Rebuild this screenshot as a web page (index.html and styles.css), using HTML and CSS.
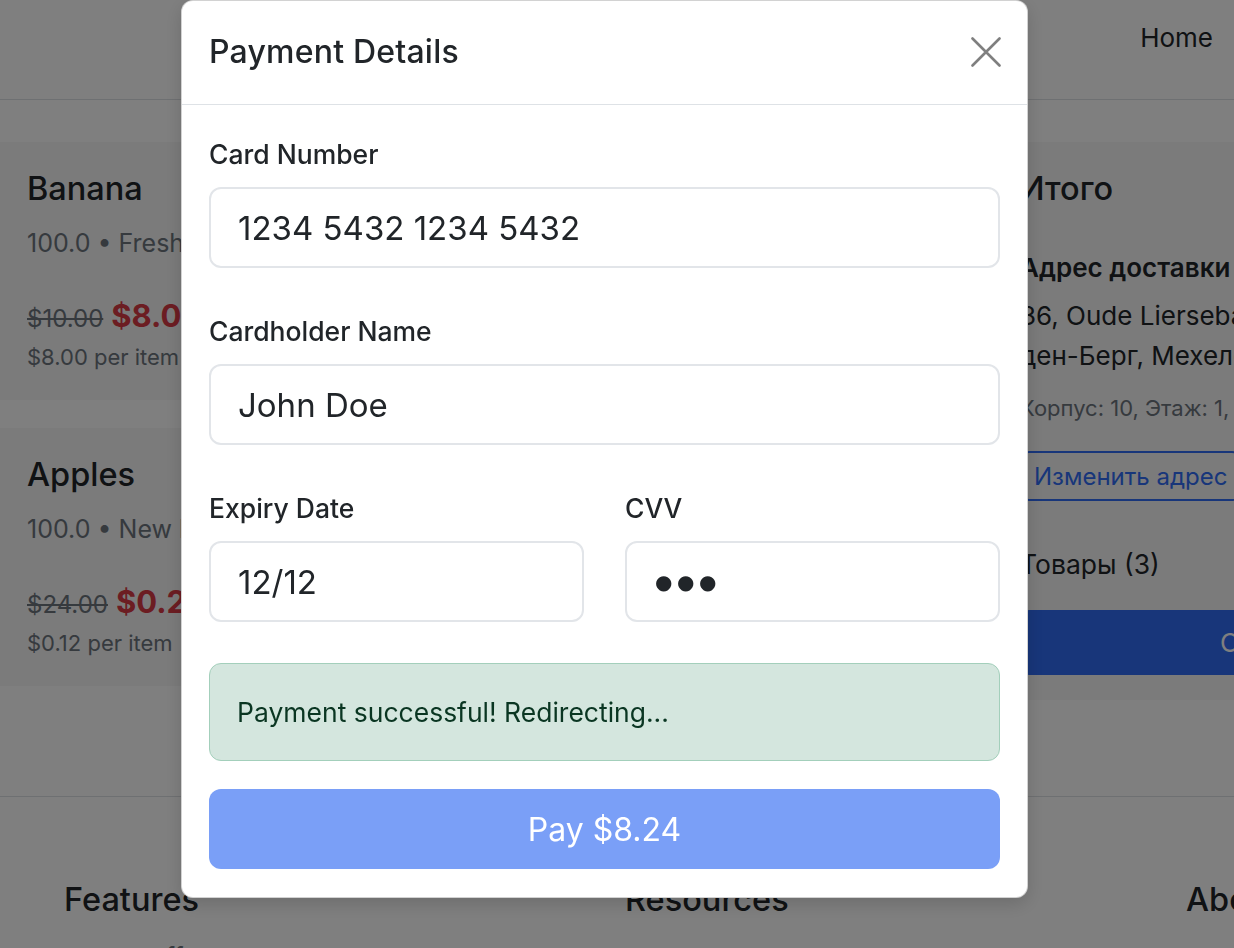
FILE: index.html
```html
<!DOCTYPE html>
<html lang="en">
<head>
<meta charset="utf-8">
<title>Checkout</title>
<link rel="stylesheet" href="styles.css">
</head>
<body>
<div class="page">
  <header class="topbar">
    <nav class="topbar-inner">
      <a class="nav-link" href="#">Home</a>
    </nav>
  </header>

  <main class="main">
    <section class="products">
      <article class="product">
        <h3 class="product-title">Banana</h3>
        <p class="product-meta">100.0 • Fresh fruits</p>
        <div class="price-row">
          <span class="old-price">$10.00</span>
          <span class="new-price">$8.00</span>
        </div>
        <p class="per-item">$8.00 per item</p>
      </article>
      <article class="product">
        <h3 class="product-title">Apples</h3>
        <p class="product-meta">100.0 • New harvest</p>
        <div class="price-row">
          <span class="old-price">$24.00</span>
          <span class="new-price">$0.24</span>
        </div>
        <p class="per-item">$0.12 per item</p>
      </article>
    </section>

    <aside class="summary">
      <h3 class="summary-title">Итого</h3>
      <p class="addr-label">Адрес доставки</p>
      <p class="addr-line">36, Oude Liersebaan, Синт-Катлейне-Вавер-</p>
      <p class="addr-line">ден-Берг, Мехелен, Бельгия</p>
      <p class="addr-extra">Корпус: 10, Этаж: 1, Квартира: 5</p>
      <button class="btn-outline" type="button">Изменить адрес</button>
      <p class="items-count">Товары (3)</p>
      <button class="btn-checkout" type="button">Оформить заказ</button>
    </aside>
  </main>

  <footer class="footer">
    <div class="footer-col">
      <h5 class="footer-title">Features</h5>
      <p class="footer-link">Cool stuff</p>
    </div>
    <div class="footer-col">
      <h5 class="footer-title">Resources</h5>
      <p class="footer-link">Resource</p>
    </div>
    <div class="footer-col">
      <h5 class="footer-title">About</h5>
      <p class="footer-link">Team</p>
    </div>
  </footer>
</div>

<div class="backdrop"></div>

<div class="modal" role="dialog" aria-label="Payment Details">
  <div class="modal-header">
    <h2 class="modal-title">Payment Details</h2>
    <button class="btn-close" type="button" aria-label="Close">
      <svg width="30" height="30" viewBox="0 0 30 30"><path d="M1.5 1.5 L28.5 28.5 M28.5 1.5 L1.5 28.5" stroke="#000" stroke-opacity="0.5" stroke-width="2.6" stroke-linecap="round"/></svg>
    </button>
  </div>
  <div class="modal-body">
    <div class="field">
      <label class="label" for="card">Card Number</label>
      <input class="input" id="card" type="text" value="1234 5432 1234 5432" readonly>
    </div>
    <div class="field">
      <label class="label" for="name">Cardholder Name</label>
      <input class="input" id="name" type="text" value="John Doe" readonly>
    </div>
    <div class="field-row">
      <div>
        <label class="label" for="exp">Expiry Date</label>
        <input class="input" id="exp" type="text" value="12/12" readonly>
      </div>
      <div>
        <label class="label" for="cvv">CVV</label>
        <input class="input input-cvv" id="cvv" type="text" value="●●●" readonly>
      </div>
    </div>
    <div class="alert">Payment successful! Redirecting...</div>
    <button class="btn-pay" type="button" disabled>Pay $8.24</button>
  </div>
</div>
</body>
</html>
```

FILE: styles.css
```css
* { box-sizing: border-box; }

html, body {
  margin: 0;
  height: 100%;
  overflow: hidden;
}

body {
  font-family: Inter, "Liberation Sans", "Noto Sans", sans-serif;
  color: #212529;
  background: #ffffff;
}

p, h2, h3, h5 { margin: 0; }

.page { width: 1800px; }

/* top bar */
.topbar {
  height: 100px;
  border-bottom: 1px solid #dde0e4;
}
.topbar-inner {
  width: 1213px;
  display: flex;
  justify-content: flex-end;
  padding-top: 20px;
}
.nav-link {
  font-size: 26px;
  line-height: 36px;
  color: #212529;
  text-decoration: none;
}

/* main */
.main {
  display: grid;
  grid-template-columns: 966px 662px;
  column-gap: 27px;
  align-items: start;
  padding: 42px 0 96px;
}
.products {
  display: flex;
  flex-direction: column;
  gap: 28px;
}
.product {
  background: #f6f6f7;
  padding: 29px 27px 27px;
}
.product-title {
  font-size: 32.5px;
  line-height: 36px;
  font-weight: 500;
  margin-bottom: 18px;
}
.product-meta {
  font-size: 25px;
  line-height: 36px;
  color: #6c757d;
  margin-bottom: 37px;
}
.price-row {
  display: flex;
  align-items: baseline;
  gap: 8px;
  height: 36px;
  line-height: 36px;
}
.old-price {
  font-size: 24px;
  color: #6c757d;
  text-decoration: line-through;
}
.new-price {
  font-size: 31px;
  font-weight: 700;
  color: #d93a45;
}
.per-item {
  font-size: 22px;
  line-height: 31px;
  color: #6c757d;
  margin-top: 8px;
}

.summary {
  background: #f6f6f7;
  padding: 29px 27px 25px;
}
.summary-title {
  font-size: 32.5px;
  line-height: 36px;
  font-weight: 500;
  margin-bottom: 43px;
}
.addr-label {
  font-size: 26px;
  line-height: 36px;
  font-weight: 600;
  margin-bottom: 10px;
}
.addr-line {
  font-size: 26px;
  line-height: 40px;
  white-space: nowrap;
}
.addr-extra {
  font-size: 22px;
  line-height: 30px;
  color: #6c757d;
  margin-top: 17px;
  white-space: nowrap;
}
.btn-outline {
  display: block;
  margin-top: 28px;
  height: 50px;
  padding: 0 12px;
  border: 2px solid #306cf4;
  border-radius: 9px;
  background: transparent;
  color: #306cf4;
  font: inherit;
  font-size: 24px;
}
.items-count {
  font-size: 26.5px;
  line-height: 36px;
  margin-top: 45px;
}
.btn-checkout {
  display: block;
  width: 100%;
  margin-top: 28px;
  height: 65px;
  border: 0;
  border-radius: 9px;
  background: #306cf4;
  color: #ffffff;
  font: inherit;
  font-size: 26px;
}

/* footer */
.footer {
  border-top: 1px solid #dde0e4;
  display: grid;
  grid-template-columns: 561px 561px 561px;
  padding: 85px 0 0 64px;
}
.footer-title {
  font-size: 32.5px;
  line-height: 36px;
  font-weight: 500;
  margin-bottom: 22px;
}
.footer-link {
  font-size: 26px;
  line-height: 36px;
  color: #6c757d;
}

/* modal */
.backdrop {
  position: fixed;
  inset: 0;
  background: rgba(0, 0, 0, 0.5);
}
.modal {
  position: fixed;
  left: 181px;
  top: 0;
  width: 847px;
  background: #ffffff;
  border: 1px solid rgba(0, 0, 0, 0.175);
  border-radius: 12px;
  box-shadow: 0 6px 18px rgba(0, 0, 0, 0.15);
}
.modal-header {
  height: 104px;
  border-bottom: 1px solid #dee2e6;
  display: flex;
  align-items: center;
  justify-content: space-between;
  padding: 0 26px 2px 27px;
}
.modal-title {
  font-size: 32px;
  line-height: 38px;
  font-weight: 500;
  letter-spacing: 0.2px;
}
.btn-close {
  width: 30px;
  height: 30px;
  padding: 0;
  border: 0;
  background: transparent;
  display: flex;
}
.modal-body {
  padding: 31px 27px 28px;
}
.field { margin-bottom: 45px; }
.field-row {
  display: grid;
  grid-template-columns: 1fr 1fr;
  column-gap: 41px;
  margin-bottom: 41px;
}
.label {
  display: block;
  font-size: 26.5px;
  line-height: 36px;
  font-weight: 500;
  margin-bottom: 15px;
}
.input {
  display: block;
  width: 100%;
  height: 81px;
  padding: 0 27px;
  border: 2px solid #e2e5e9;
  border-radius: 12px;
  background: #ffffff;
  color: #212529;
  font-family: inherit;
  font-size: 33px;
  outline: none;
}
.input-cvv {
  font-family: "DejaVu Sans", sans-serif;
  font-size: 20px;
  letter-spacing: 4.5px;
  padding-left: 28px;
}
.alert {
  padding: 30px 27px;
  border: 1px solid #a3cfbb;
  border-radius: 12px;
  background: #d4e6de;
  color: #0a3622;
  font-size: 26.5px;
  line-height: 36px;
  margin-bottom: 28px;
}
.btn-pay {
  display: block;
  width: 100%;
  height: 80px;
  border: 0;
  border-radius: 12px;
  background: #7a9ff7;
  color: #ffffff;
  font-family: inherit;
  font-size: 32px;
}
```
